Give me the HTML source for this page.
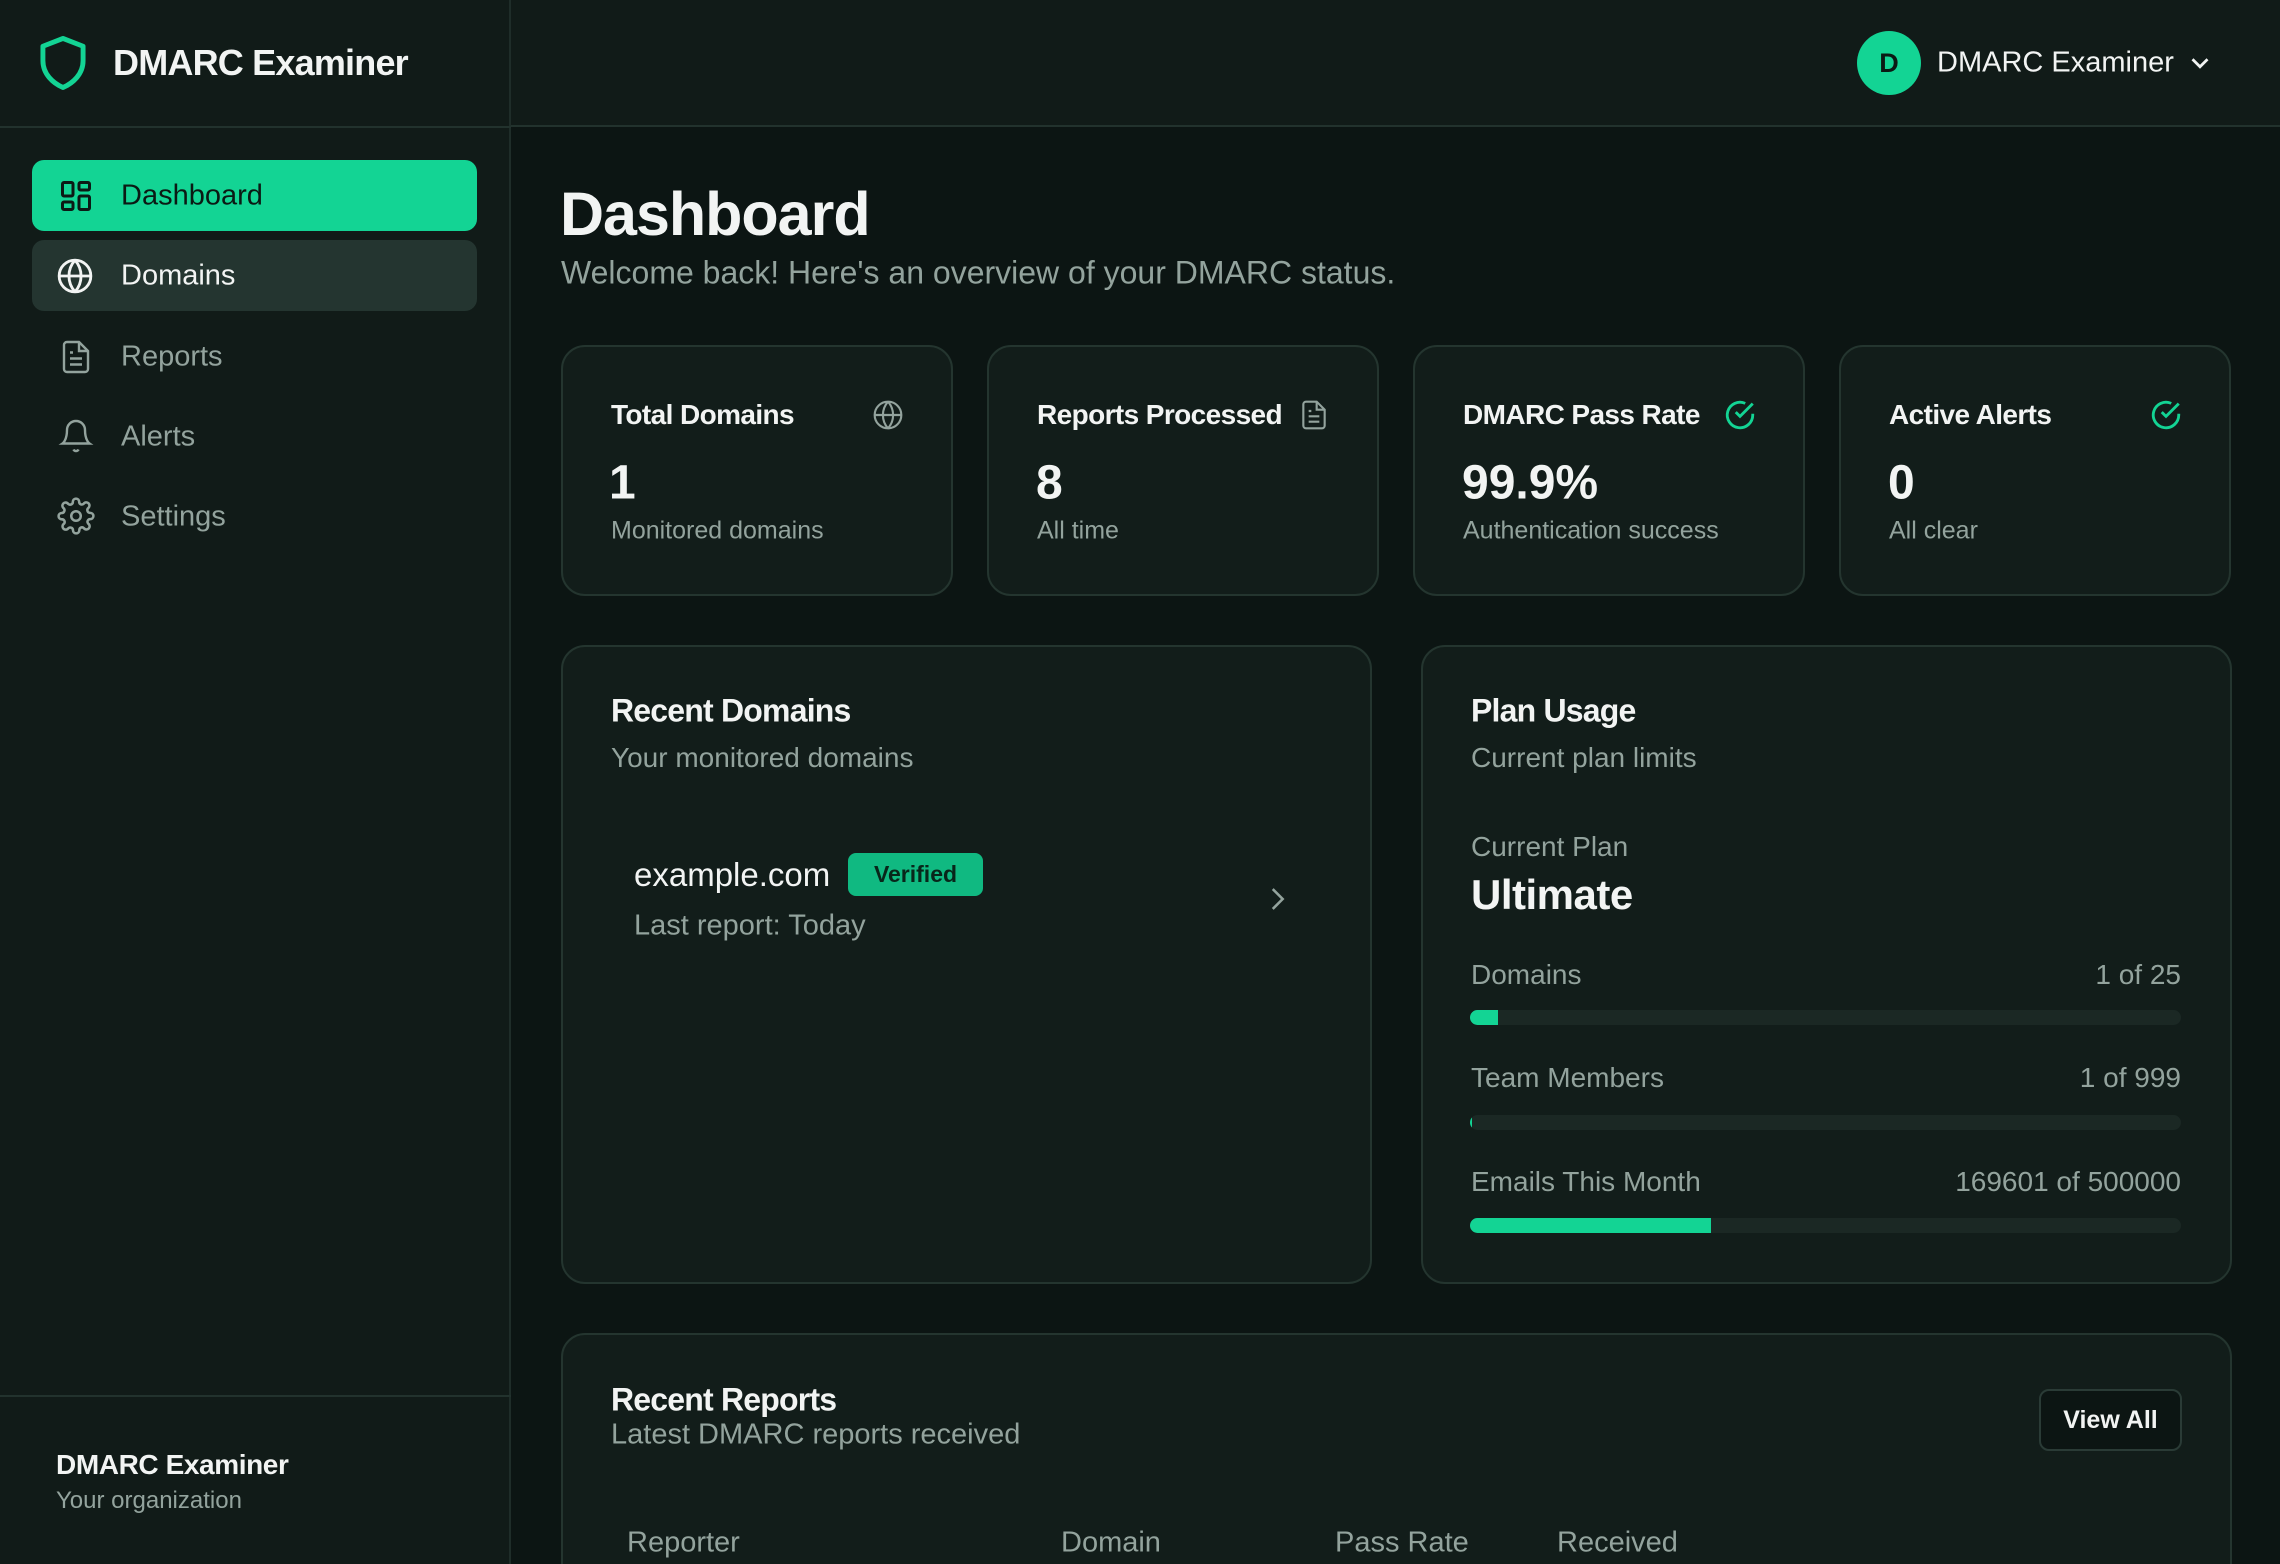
<!DOCTYPE html>
<html><head><meta charset="utf-8"><style>
*{box-sizing:border-box;margin:0;padding:0}
html,body{width:2280px;height:1564px;overflow:hidden}
body{background:#0c1513;font-family:"Liberation Sans",sans-serif;color:#f2f4f3}
#w{position:relative;width:2280px;height:1564px;overflow:hidden}
.a{position:absolute;white-space:nowrap}
.card{position:absolute;background:#121d1a;border:2px solid #24352f;border-radius:24px}
.gray{color:#93a39d}
.vc{transform:translateY(-50%)}
svg{position:absolute}
.bar{position:absolute;left:1470px;width:711px;height:15px;border-radius:8px;background:#1b2824;overflow:hidden}
.bar i{display:block;height:100%;background:#13d494}
</style></head><body><div id="w">
<!-- sidebar -->
<div class="a" style="left:0;top:0;width:511px;height:1564px;background:#111b18;border-right:2px solid #1f2d29"></div>
<div class="a" style="left:511px;top:0;width:1769px;height:127px;background:#111b18;border-bottom:2px solid #22322d"></div>
<div class="a" style="left:0;top:126px;width:511px;height:2px;background:#22322d"></div>
<svg style="left:36px;top:34px" width="54" height="58" viewBox="0 0 24 26"><path d="M12 2 L21 5.5 V12 C21 18 16.5 22 12 24 C7.5 22 3 18 3 12 V5.5 Z" fill="none" stroke="#13d494" stroke-width="2.2" stroke-linejoin="round"/></svg>
<div class="a vc" style="left:113px;top:63px;font-size:36px;font-weight:bold;letter-spacing:-0.8px">DMARC Examiner</div>

<div class="a" style="left:32px;top:160px;width:445px;height:71px;background:#13d494;border-radius:12px"></div>
<svg style="left:58px;top:178px" width="36" height="36" viewBox="0 0 24 24" fill="none" stroke="#0c1a15" stroke-width="2"><rect x="3" y="3" width="7" height="9" rx="1"/><rect x="14" y="3" width="7" height="5" rx="1"/><rect x="14" y="12" width="7" height="9" rx="1"/><rect x="3" y="16" width="7" height="5" rx="1"/></svg>
<div class="a vc" style="left:121px;top:196px;font-size:29px;color:#0b1a14">Dashboard</div>

<div class="a" style="left:32px;top:240px;width:445px;height:71px;background:#243530;border-radius:12px"></div>
<svg style="left:56px;top:257px" width="38" height="38" viewBox="0 0 24 24" fill="none" stroke="#f2f4f3" stroke-width="1.8"><circle cx="12" cy="12" r="10"/><path d="M2 12h20M12 2a15 15 0 0 1 0 20M12 2a15 15 0 0 0 0 20"/></svg>
<div class="a vc" style="left:121px;top:276px;font-size:29px">Domains</div>

<svg style="left:58px;top:338px" width="36" height="38" viewBox="0 0 24 24" fill="none" stroke="#93a39d" stroke-width="1.6"><path d="M14 2H6a2 2 0 0 0-2 2v16a2 2 0 0 0 2 2h12a2 2 0 0 0 2-2V8z"/><path d="M14 2v6h6M16 13H8M16 17H8M10 9H8"/></svg>
<div class="a vc gray" style="left:121px;top:357px;font-size:29px">Reports</div>
<svg style="left:58px;top:416px" width="36" height="40" viewBox="0 0 24 24" fill="none" stroke="#93a39d" stroke-width="1.6"><path d="M6 8a6 6 0 0 1 12 0c0 7 3 9 3 9H3s3-2 3-9M10.3 21a1.9 1.9 0 0 0 3.4 0"/></svg>
<div class="a vc gray" style="left:121px;top:437px;font-size:29px">Alerts</div>
<svg style="left:57px;top:497px" width="38" height="38" viewBox="0 0 24 24" fill="none" stroke="#93a39d" stroke-width="1.6"><circle cx="12" cy="12" r="3"/><path d="M19.4 15a1.7 1.7 0 0 0 .3 1.8l.1.1a2 2 0 1 1-2.8 2.8l-.1-.1a1.7 1.7 0 0 0-1.8-.3 1.7 1.7 0 0 0-1 1.5V21a2 2 0 1 1-4 0v-.1a1.7 1.7 0 0 0-1.1-1.5 1.7 1.7 0 0 0-1.8.3l-.1.1a2 2 0 1 1-2.8-2.8l.1-.1a1.7 1.7 0 0 0 .3-1.8 1.7 1.7 0 0 0-1.500-1H3a2 2 0 1 1 0-4h.1a1.7 1.7 0 0 0 1.5-1.1 1.7 1.7 0 0 0-.3-1.8l-.1-.1a2 2 0 1 1 2.8-2.8l.1.1a1.7 1.7 0 0 0 1.8.3H9a1.7 1.7 0 0 0 1-1.5V3a2 2 0 1 1 4 0v.1a1.7 1.7 0 0 0 1 1.5 1.7 1.7 0 0 0 1.8-.3l.1-.1a2 2 0 1 1 2.8 2.8l-.1.1a1.7 1.7 0 0 0-.3 1.8V9a1.7 1.7 0 0 0 1.5 1H21a2 2 0 1 1 0 4h-.1a1.7 1.7 0 0 0-1.5 1z"/></svg>
<div class="a vc gray" style="left:121px;top:517px;font-size:29px">Settings</div>

<div class="a" style="left:0;top:1395px;width:511px;height:2px;background:#22322d"></div>
<div class="a vc" style="left:56px;top:1465px;font-size:28px;font-weight:bold;letter-spacing:-0.4px">DMARC Examiner</div>
<div class="a vc gray" style="left:56px;top:1501px;font-size:24px">Your organization</div>

<!-- top right -->
<div class="a" style="left:1857px;top:31px;width:64px;height:64px;border-radius:50%;background:#13d494;color:#0b1a14;font-size:27px;font-weight:bold;text-align:center;line-height:64px">D</div>
<div class="a vc" style="left:1937px;top:63px;font-size:29px">DMARC Examiner</div>
<svg style="left:2185px;top:48px" width="30" height="30" viewBox="0 0 24 24" fill="none" stroke="#f2f4f3" stroke-width="2.2"><path d="M6 9l6 6 6-6"/></svg>

<!-- main -->
<div class="a vc" style="left:560px;top:214px;font-size:61px;font-weight:bold;letter-spacing:-1px">Dashboard</div>
<div class="a vc gray" style="left:561px;top:273px;font-size:32px">Welcome back! Here's an overview of your DMARC status.</div>

<div class="card" style="left:561px;top:345px;width:392px;height:251px"></div>
<div class="card" style="left:987px;top:345px;width:392px;height:251px"></div>
<div class="card" style="left:1413px;top:345px;width:392px;height:251px"></div>
<div class="card" style="left:1839px;top:345px;width:392px;height:251px"></div>

<div class="a vc" style="left:611px;top:415px;font-size:28px;font-weight:bold;letter-spacing:-0.6px">Total Domains</div>
<svg style="left:872px;top:399px" width="32" height="32" viewBox="0 0 24 24" fill="none" stroke="#93a39d" stroke-width="1.6"><circle cx="12" cy="12" r="10"/><path d="M2 12h20M12 2a15 15 0 0 1 0 20M12 2a15 15 0 0 0 0 20"/></svg>
<div class="a vc" style="left:609px;top:483px;font-size:48px;font-weight:bold">1</div>
<div class="a vc gray" style="left:611px;top:531px;font-size:25px">Monitored domains</div>

<div class="a vc" style="left:1037px;top:415px;font-size:28px;font-weight:bold;letter-spacing:-0.6px">Reports Processed</div>
<svg style="left:1298px;top:398px" width="32" height="34" viewBox="0 0 24 24" fill="none" stroke="#93a39d" stroke-width="1.6"><path d="M14 2H6a2 2 0 0 0-2 2v16a2 2 0 0 0 2 2h12a2 2 0 0 0 2-2V8z"/><path d="M14 2v6h6M16 13H8M16 17H8M10 9H8"/></svg>
<div class="a vc" style="left:1036px;top:483px;font-size:48px;font-weight:bold">8</div>
<div class="a vc gray" style="left:1037px;top:531px;font-size:25px">All time</div>

<div class="a vc" style="left:1463px;top:415px;font-size:28px;font-weight:bold;letter-spacing:-0.6px">DMARC Pass Rate</div>
<svg style="left:1723px;top:398px" width="34" height="34" viewBox="0 0 24 24" fill="none" stroke="#13d494" stroke-width="2"><path d="M21 11.1V12a9 9 0 1 1-5.3-8.2"/><path d="M21 4L12 13l-3-3"/></svg>
<div class="a vc" style="left:1462px;top:483px;font-size:48px;font-weight:bold">99.9%</div>
<div class="a vc gray" style="left:1463px;top:531px;font-size:25px">Authentication success</div>

<div class="a vc" style="left:1889px;top:415px;font-size:28px;font-weight:bold;letter-spacing:-0.6px">Active Alerts</div>
<svg style="left:2149px;top:398px" width="34" height="34" viewBox="0 0 24 24" fill="none" stroke="#13d494" stroke-width="2"><path d="M21 11.1V12a9 9 0 1 1-5.3-8.2"/><path d="M21 4L12 13l-3-3"/></svg>
<div class="a vc" style="left:1888px;top:483px;font-size:48px;font-weight:bold">0</div>
<div class="a vc gray" style="left:1889px;top:531px;font-size:25px">All clear</div>

<!-- recent domains -->
<div class="card" style="left:561px;top:645px;width:811px;height:639px"></div>
<div class="a vc" style="left:611px;top:711px;font-size:32px;font-weight:bold;letter-spacing:-0.8px">Recent Domains</div>
<div class="a vc gray" style="left:611px;top:758px;font-size:28px">Your monitored domains</div>
<div class="a vc" style="left:634px;top:875px;font-size:33px">example.com</div>
<div class="a" style="left:848px;top:853px;width:135px;height:43px;background:#10b981;border-radius:8px;color:#08261a;font-size:23px;font-weight:bold;text-align:center;line-height:43px">Verified</div>
<div class="a vc gray" style="left:634px;top:926px;font-size:29px">Last report: Today</div>
<svg style="left:1260px;top:880px" width="34" height="38" viewBox="0 0 24 24" fill="none" stroke="#93a39d" stroke-width="1.8"><path d="M9 5l7 7-7 7"/></svg>

<!-- plan -->
<div class="card" style="left:1421px;top:645px;width:811px;height:639px"></div>
<div class="a vc" style="left:1471px;top:711px;font-size:32px;font-weight:bold;letter-spacing:-0.8px">Plan Usage</div>
<div class="a vc gray" style="left:1471px;top:758px;font-size:28px">Current plan limits</div>
<div class="a vc gray" style="left:1471px;top:847px;font-size:28px">Current Plan</div>
<div class="a vc" style="left:1471px;top:895px;font-size:42px;font-weight:bold;letter-spacing:-0.5px">Ultimate</div>
<div class="a vc gray" style="left:1471px;top:975px;font-size:28px">Domains</div>
<div class="a vc gray" style="right:99px;top:975px;font-size:28px">1 of 25</div>
<div class="bar" style="top:1010px"><i style="width:28px"></i></div>
<div class="a vc gray" style="left:1471px;top:1078px;font-size:28px">Team Members</div>
<div class="a vc gray" style="right:99px;top:1078px;font-size:28px">1 of 999</div>
<div class="bar" style="top:1115px"><i style="width:2px"></i></div>
<div class="a vc gray" style="left:1471px;top:1182px;font-size:28px">Emails This Month</div>
<div class="a vc gray" style="right:99px;top:1182px;font-size:28px">169601 of 500000</div>
<div class="bar" style="top:1218px"><i style="width:241px"></i></div>

<!-- recent reports -->
<div class="card" style="left:561px;top:1333px;width:1671px;height:300px"></div>
<div class="a vc" style="left:611px;top:1400px;font-size:32px;font-weight:bold;letter-spacing:-0.8px">Recent Reports</div>
<div class="a vc gray" style="left:611px;top:1435px;font-size:29px">Latest DMARC reports received</div>
<div class="a" style="left:2039px;top:1389px;width:143px;height:62px;border:2px solid #2a3b36;border-radius:10px;background:#0c1513;font-size:25px;font-weight:bold;text-align:center;line-height:58px">View All</div>
<div class="a vc gray" style="left:627px;top:1543px;font-size:29px">Reporter</div>
<div class="a vc gray" style="left:1061px;top:1543px;font-size:29px">Domain</div>
<div class="a vc gray" style="left:1335px;top:1543px;font-size:29px">Pass Rate</div>
<div class="a vc gray" style="left:1557px;top:1543px;font-size:29px">Received</div>
</div></body></html>
